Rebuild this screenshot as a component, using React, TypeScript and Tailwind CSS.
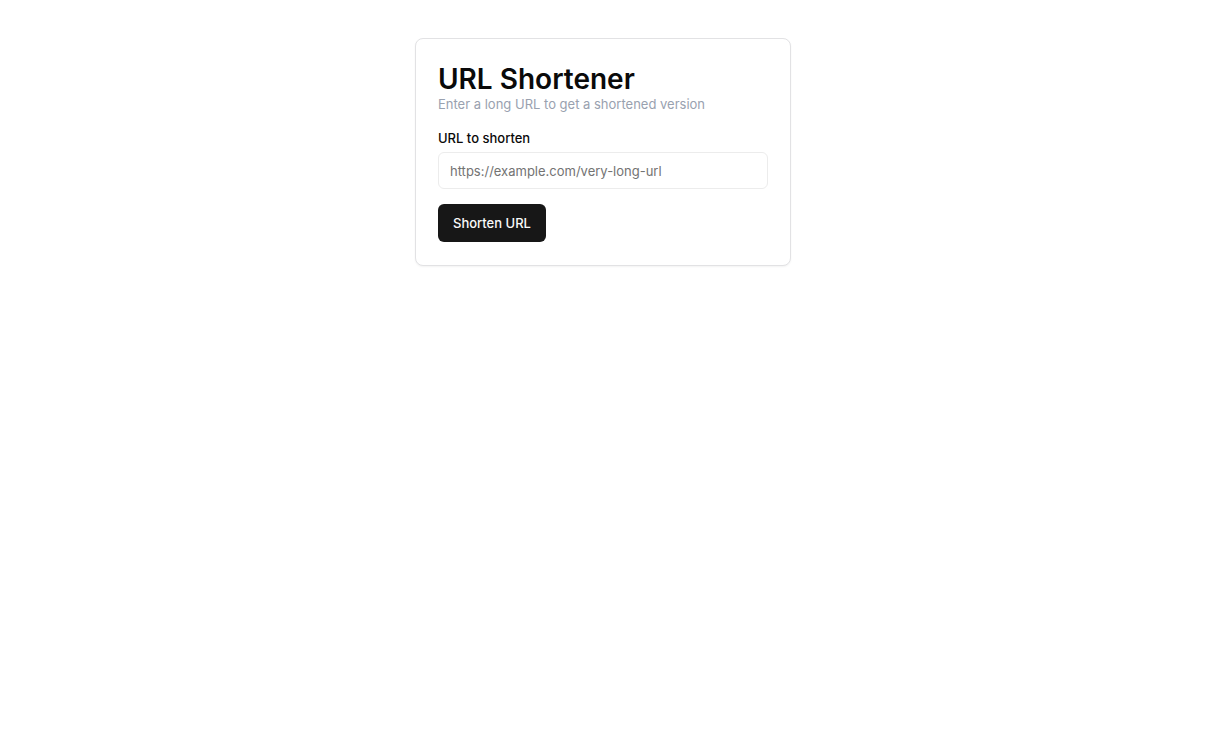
import { useState } from "react";

function App() {
    const [url, setUrl] = useState("");

    return (
        <div className="min-h-screen bg-white px-4 py-[38px] font-['Inter',sans-serif] text-[13px] leading-[18px] text-neutral-950">
            <main className="mx-auto max-w-[376px] rounded-lg border border-[#e2e2e4] bg-white px-[22px] pt-6 pb-[23px] shadow-xs">
                <h1 className="text-[28px] leading-8 font-semibold">URL Shortener</h1>
                <p className="text-gray-400">Enter a long URL to get a shortened version</p>
                <form className="mt-4" onSubmit={(e) => e.preventDefault()}>
                    <label htmlFor="url" className="block font-medium">
                        URL to shorten
                    </label>
                    <input
                        id="url"
                        type="url"
                        value={url}
                        onChange={(e) => setUrl(e.target.value)}
                        placeholder="https://example.com/very-long-url"
                        className="mt-[5px] block h-[37px] w-full rounded-md border border-[#ececec] px-[11px] placeholder:text-neutral-500"
                    />
                    <button
                        type="submit"
                        className="mt-[15px] block h-[38px] rounded-md bg-neutral-900 px-[15px] font-medium text-neutral-50 hover:bg-neutral-800"
                    >
                        Shorten URL
                    </button>
                </form>
            </main>
        </div>
    );
}

export default App;
